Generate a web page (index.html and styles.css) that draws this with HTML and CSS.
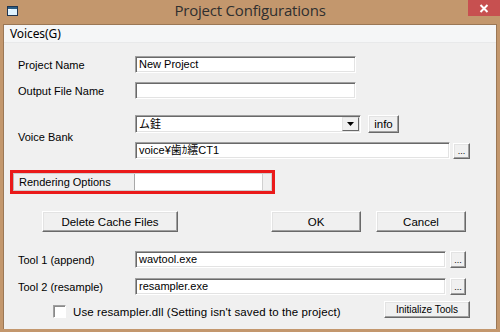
FILE: index.html
```html
<!DOCTYPE html>
<html lang="en">
<head>
  <meta charset="UTF-8" />
  <title>Project Configurations</title>
  <link rel="stylesheet" href="styles.css">
</head>
<body>
  <div class="window">
    <div class="titlebar">
      <span class="app-icon">
        <svg width="11" height="10" viewBox="0 0 11 10">
          <rect x="0.5" y="0.5" width="10" height="9" fill="#dff3ff" stroke="#1f3550" />
          <rect x="1" y="1" width="9" height="2" fill="#2d5f86" />
          <path d="M1 3.5h3" stroke="#ffffff" />
        </svg>
      </span>
      <span class="title">Project Configurations</span>
      <span class="close">
        <svg width="10" height="9" viewBox="0 0 10 9">
          <path d="M1.5 1l7 7M8.5 1l-7 7" stroke="#fff" stroke-width="2" />
        </svg>
      </span>
    </div>

    <div class="client">
      <div class="menubar"><span class="menu-item">Voices(G)</span></div>

      <div class="form">
        <div class="row row-name">
          <span class="label">Project Name</span>
          <div class="edit w-name">New Project</div>
        </div>

        <div class="row row-output">
          <span class="label">Output File Name</span>
          <div class="edit w-name"></div>
        </div>

        <div class="row row-voice">
          <span class="label">Voice Bank</span>
          <div class="voice-fields">
            <div class="voice-line">
              <div class="edit combo">
                <span>ム銈</span>
                <span class="combo-arrow">
                  <svg width="7" height="4" viewBox="0 0 7 4"><path d="M0 0h7L3.5 4z" fill="#000" /></svg>
                </span>
              </div>
              <button class="btn btn-info">info</button>
            </div>
            <div class="voice-line line-path">
              <div class="edit w-path">voice¥歯ｶ繧CT1</div>
              <button class="btn btn-dots">...</button>
            </div>
          </div>
        </div>

        <div class="render-box">
          <div class="render-inner">
            <span class="label render-label">Rendering Options</span>
            <div class="render-edit"></div>
          </div>
        </div>

        <div class="row row-buttons">
          <button class="btn btn-cache">Delete Cache Files</button>
          <button class="btn btn-ok">OK</button>
          <button class="btn btn-cancel">Cancel</button>
        </div>

        <div class="row row-tool1">
          <span class="label">Tool 1 (append)</span>
          <div class="edit w-tool">wavtool.exe</div>
          <button class="btn btn-dots small">...</button>
        </div>

        <div class="row row-tool2">
          <span class="label">Tool 2 (resample)</span>
          <div class="edit w-tool">resampler.exe</div>
          <button class="btn btn-dots small">...</button>
        </div>

        <div class="row row-check">
          <span class="checkbox"></span>
          <span class="check-text">Use resampler.dll (Setting isn't saved to the project)</span>
          <button class="btn btn-init">Initialize Tools</button>
        </div>
      </div>
    </div>
  </div>
</body>
</html>
```

FILE: styles.css
```css
:root {
  --frame: #c3976d;
  --face: #f0f0f0;
  --dark: #696969;
  --shadow: #a0a0a0;
  --light: #e3e3e3;
}

body {
  margin: 0;
  background: var(--frame);
  font-family: 'Liberation Sans', Arial, sans-serif;
  font-size: 11px;
  color: #000;
}

.window {
  width: 500px;
  height: 332px;
  background: var(--frame);
  display: flex;
  flex-direction: column;
  box-sizing: border-box;
}

/* title bar */
.titlebar {
  height: 24px;
  display: grid;
  grid-template-columns: 1fr auto 1fr;
  align-items: start;
}

.app-icon {
  display: flex;
  padding: 6px 0 0 7px;
}

.title {
  font-family: 'Open Sans', 'Noto Sans', sans-serif;
  font-size: 15px;
  line-height: 21px;
  color: #2f2f2f;
  letter-spacing: -0.2px;
}

.close {
  justify-self: end;
  width: 32px;
  height: 16px;
  background: #c75050;
  display: flex;
  align-items: center;
  justify-content: center;
}

/* client area */
.client {
  flex: 1;
  margin: 0 3px 3px;
  background: var(--face);
  border: 1px solid #9b7755;
  border-bottom: none;
  display: flex;
  flex-direction: column;
}

.menubar {
  height: 17px;
  background: #f5f6f7;
  border-bottom: 1px solid #e8e9ea;
  padding-left: 6px;
  display: flex;
  align-items: center;
}

.menu-item {
  font-family: 'Noto Sans', 'Open Sans', sans-serif;
  font-size: 12px;
  letter-spacing: -0.1px;
}

.form {
  padding-left: 14px;
  width: 452px;
  display: flex;
  flex-direction: column;
}

.row {
  display: flex;
  align-items: center;
}

.label {
  width: 117px;
  flex-shrink: 0;
}

/* sunken edit box */
.edit {
  box-sizing: border-box;
  height: 17px;
  background: #fff;
  border: 1px solid;
  border-color: var(--shadow) #fff #fff var(--shadow);
  box-shadow: inset 1px 1px var(--dark), inset -1px -1px var(--light);
  padding: 0 3px;
  line-height: 15px;
  white-space: nowrap;
  font-family: 'Liberation Sans', 'Noto Sans CJK JP', sans-serif;
}

/* raised button */
.btn {
  box-sizing: border-box;
  background: var(--face);
  border: 1px solid;
  border-color: #fff var(--dark) var(--dark) #fff;
  box-shadow: inset -1px -1px var(--shadow), inset 1px 1px var(--light);
  font-family: 'Liberation Sans', Arial, sans-serif;
  font-size: 11px;
  color: #000;
  padding: 0;
  border-radius: 0;
}

.w-name { width: 221px; }

.row-name { margin-top: 13px; }
.row-output { margin-top: 9px; }
.row-voice { margin-top: 16px; }

.voice-fields {
  display: flex;
  flex-direction: column;
  gap: 9px;
}

.voice-line {
  display: flex;
  align-items: center;
}

.combo {
  width: 226px;
  height: 18px;
  display: flex;
  justify-content: space-between;
  align-items: center;
  padding: 0 1px 0 3px;
}

.combo-arrow {
  box-sizing: border-box;
  width: 17px;
  height: 14px;
  border: 1px solid;
  border-color: var(--light) var(--dark) var(--dark) var(--light);
  background: var(--face);
  display: flex;
  align-items: center;
  justify-content: center;
}

.btn-info {
  width: 31px;
  height: 18px;
  margin-left: 7px;
  font-size: 11.5px;
}

.w-path { width: 315px; }

.btn-dots {
  width: 17px;
  height: 16px;
  margin-left: 3px;
  font-size: 9px;
  line-height: 10px;
}

.btn-dots.small {
  width: 16px;
  height: 17px;
  margin-left: 4px;
}

/* highlighted rendering options */
.render-box {
  margin: 11px 0 0 -8px;
  width: 265px;
  height: 24px;
  box-sizing: border-box;
  border: 3px solid #ea1a1a;
  padding: 0;
}

.render-inner {
  height: 16px;
  display: flex;
  align-items: stretch;
  border: 1px solid #cfcfcf;
  border-left-color: #b8b8b8;
}

.render-label {
  width: 121px;
  padding-left: 5px;
  line-height: 16px;
  box-sizing: border-box;
  border-right: 1px solid #a8a8a8;
}

.render-edit {
  width: 127px;
  background: #fff;
  border-right: 1px solid #d0d0d0;
}

.row-buttons {
  margin-top: 17px;
  height: 21px;
  align-items: stretch;
}

.btn-cache {
  width: 136px;
  margin-left: 24px;
  font-size: 11.5px;
}

.btn-ok {
  width: 90px;
  margin-left: 93px;
  font-size: 11.5px;
}

.btn-cancel {
  width: 90px;
  margin-left: 15px;
  font-size: 11.5px;
}

.w-tool { width: 311px; }

.row-tool1 { margin-top: 19px; }
.row-tool2 { margin-top: 10px; }

.row-check {
  margin-top: 6px;
  height: 17px;
}

.checkbox {
  box-sizing: border-box;
  width: 13px;
  height: 13px;
  margin: 4px 0 0 35px;
  background: #fff;
  border: 1px solid;
  border-color: var(--shadow) #fff #fff var(--shadow);
  box-shadow: inset 1px 1px #8a8a8a;
}

.check-text {
  margin: 5px 0 0 7px;
  font-size: 11.5px;
  letter-spacing: 0.1px;
}

.btn-init {
  width: 86px;
  height: 17px;
  margin-left: auto;
  font-size: 10px;
}
```
